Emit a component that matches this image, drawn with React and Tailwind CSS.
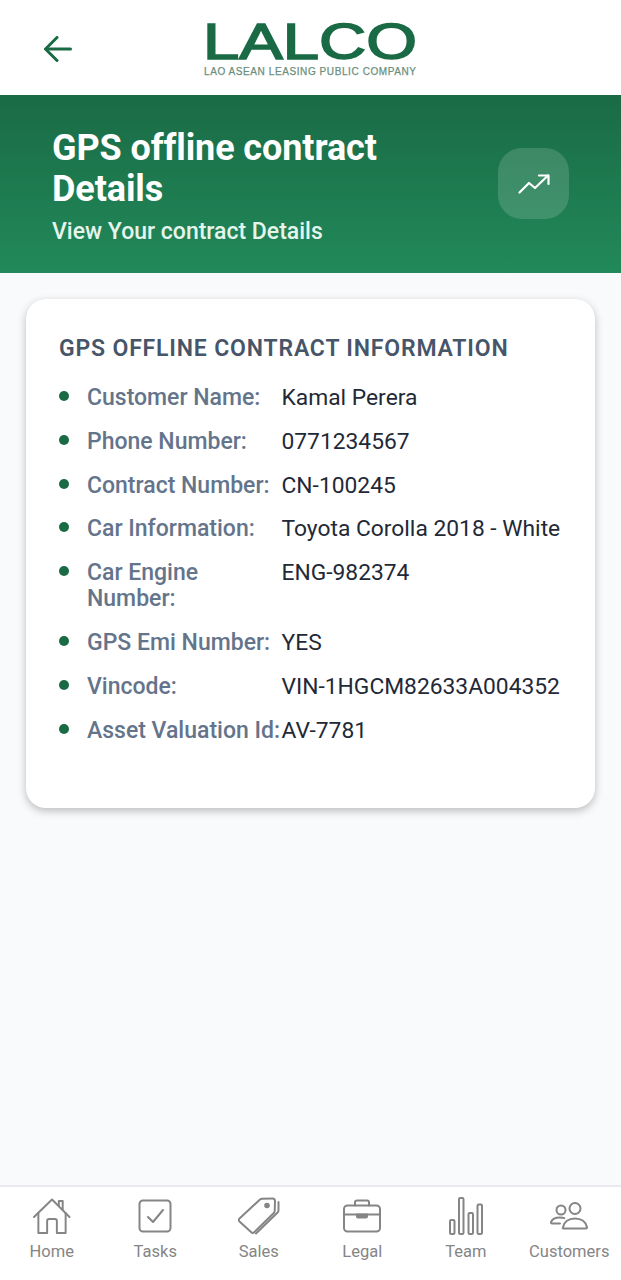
import React from "react";

const rows = [
  ["Customer Name:", "Kamal Perera"],
  ["Phone Number:", "0771234567"],
  ["Contract Number:", "CN-100245"],
  ["Car Information:", "Toyota Corolla 2018 - White"],
  ["Car Engine Number:", "ENG-982374"],
  ["GPS Emi Number:", "YES"],
  ["Vincode:", "VIN-1HGCM82633A004352"],
  ["Asset Valuation Id:", "AV-7781"],
];

const iconProps = {
  fill: "none",
  stroke: "#858585",
  strokeWidth: 2,
  strokeLinecap: "round",
  strokeLinejoin: "round",
};

function HomeIcon() {
  return (
    <svg width="40" height="37" viewBox="0 0 40 38" {...iconProps}>
      <path d="M1.5 19.5 20 1.5l18 18" />
      <path d="M6 15.5V36h9V23.5a2 2 0 0 1 2-2h6a2 2 0 0 1 2 2V36h9V15.5" />
      <path d="M27 8V3h4v9" />
    </svg>
  );
}
function TasksIcon() {
  return (
    <svg width="34" height="34" viewBox="0 0 34 34" {...iconProps}>
      <rect x="1.5" y="1.5" width="31" height="31" rx="3.5" />
      <path d="m10 18 5 5 10-12" />
    </svg>
  );
}
function SalesIcon() {
  return (
    <svg width="42" height="38" viewBox="0 0 42 38" {...iconProps}>
      <path d="M1.5 21.5 22 2.5a3 3 0 0 1 2-.8l10.5-.2a2.5 2.5 0 0 1 2.5 2.5l-.3 10a3 3 0 0 1-.9 2L16.5 35a2.5 2.5 0 0 1-3.5 0L1.5 24.5a2 2 0 0 1 0-3Z" />
      <circle cx="29" cy="8.5" r="1.8" fill="#858585" />
      <path d="M40.5 5v8.5a3 3 0 0 1-.9 2L18 36.5" />
    </svg>
  );
}
function LegalIcon() {
  return (
    <svg width="38" height="34" viewBox="0 0 38 34" {...iconProps}>
      <rect x="1" y="6.5" width="36" height="26" rx="3.5" />
      <path d="M12 6.5V3.5a2 2 0 0 1 2-2h10a2 2 0 0 1 2 2v3" />
      <path d="M1 15.5h36" />
      <path d="M14 15.5h10v2a1 1 0 0 1-1 1h-8a1 1 0 0 1-1-1Z" fill="#858585" />
    </svg>
  );
}
function TeamIcon() {
  return (
    <svg width="34" height="38" viewBox="0 0 34 38" {...iconProps}>
      <rect x="1" y="23" width="4.5" height="14" rx="1.2" />
      <rect x="10" y="1" width="4.5" height="36" rx="1.2" />
      <rect x="19.5" y="16" width="4.5" height="21" rx="1.2" />
      <rect x="28.5" y="7.5" width="4.5" height="29.5" rx="1.2" />
    </svg>
  );
}
function CustomersIcon() {
  return (
    <svg width="38" height="28" viewBox="0 0 38 28" {...iconProps}>
      <circle cx="11" cy="8" r="4.5" />
      <circle cx="25" cy="6.5" r="5.5" />
      <path d="M13 26.5h23a1 1 0 0 0 1-1.2C36 20 31.5 16.5 25 16.5S14 20 13 25.3a1 1 0 0 0 0 1.2Z" />
      <path d="M10 21.5H2a1 1 0 0 1-1-1.3c1-2.8 4.5-4.7 9-4.7 1.5 0 3 .2 4.2.6" />
    </svg>
  );
}

const nav = [
  ["Home", HomeIcon],
  ["Tasks", TasksIcon],
  ["Sales", SalesIcon],
  ["Legal", LegalIcon],
  ["Team", TeamIcon],
  ["Customers", CustomersIcon],
];

export default function App() {
  return (
    <div className="flex min-h-[1280px] flex-col bg-[#f8fafc] font-['Roboto',sans-serif]">
      <header className="relative flex h-[95px] items-center justify-center bg-white">
        <svg
          className="absolute left-[44px] top-[36px]"
          width="28"
          height="26"
          viewBox="0 0 28 26"
          fill="none"
          stroke="#1a6b45"
          strokeWidth="3"
          strokeLinecap="round"
          strokeLinejoin="round"
        >
          <path d="M13 1.5 1.5 13 13 24.5" />
          <path d="M2 13h24.5" />
        </svg>
        <svg className="mt-[-3px]" width="216" height="70" viewBox="0 0 216 70">
          <text
            x="0"
            y="48"
            textLength="214"
            lengthAdjust="spacingAndGlyphs"
            fontFamily="'Liberation Sans', sans-serif"
            fontSize="50"
            fill="#1a6b45"
            stroke="#1a6b45"
            strokeWidth="1.6"
          >
            LALCO
          </text>
          <text
            x="1"
            y="64"
            textLength="212"
            lengthAdjust="spacing"
            fontFamily="'Liberation Sans', sans-serif"
            fontSize="10"
            fill="#6b8f7d"
            stroke="#6b8f7d"
            strokeWidth="0.25"
          >
            LAO ASEAN LEASING PUBLIC COMPANY
          </text>
        </svg>
      </header>

      <section className="flex h-[178px] items-center justify-between bg-gradient-to-b from-[#1a6b45] to-[#21895a] pl-[52px] pr-[52px]">
        <div className="w-[360px] pt-[6px]">
          <h1 className="text-[36px] leading-[41px] font-bold tracking-[-0.1px] text-white">GPS offline contract Details</h1>
          <p className="mt-[8px] text-[23px] leading-[28px] font-medium text-[#e6f5ec]">View Your contract Details</p>
        </div>
        <div className="mb-[1px] flex h-[71px] w-[71px] items-center justify-center rounded-[24px] bg-white/15">
          <svg
            width="32"
            height="20"
            viewBox="0 0 32 20"
            fill="none"
            stroke="white"
            strokeWidth="2.2"
            strokeLinecap="round"
            strokeLinejoin="round"
          >
            <path d="m1.5 18.5 9.5-9.5 6 5L30 1.5" />
            <path d="M21 1.5h9.5V10" />
          </svg>
        </div>
      </section>

      <main className="flex-1 px-[26px] pt-[26px]">
        <div className="h-[509px] rounded-[20px] bg-white pl-[33px] pr-[20px] pt-[35.5px] shadow-[0_3px_8px_rgba(0,0,0,0.25)]">
          <h2 className="text-[23px] leading-[28px] font-semibold tracking-[0.82px] text-[#475569]">
            GPS OFFLINE CONTRACT INFORMATION
          </h2>
          <ul className="mt-[22.5px] flex flex-col gap-[17.8px]">
            {rows.map(([label, value]) => (
              <li key={label} className="flex items-start text-[23px] leading-[26px]">
                <span className="mt-[6px] h-[10px] w-[10px] shrink-0 rounded-full bg-[#1a6b45]" />
                <span className="ml-[18px] w-[194.5px] shrink-0 font-medium text-[#64748b]">{label}</span>
                <span className="whitespace-nowrap text-[22.8px] text-[#1f2937]">{value}</span>
              </li>
            ))}
          </ul>
        </div>
      </main>

      <nav className="grid h-[95px] grid-cols-6 border-t-2 border-[#e8eaed] bg-white">
        {nav.map(([label, Icon]) => (
          <div key={label} className="flex flex-col items-center">
            <div className="flex h-[54px] items-center justify-center pt-[4px]">
              <Icon />
            </div>
            <span className="mt-[1px] text-[16.5px] leading-[20px] text-[#858585]">{label}</span>
          </div>
        ))}
      </nav>
    </div>
  );
}
